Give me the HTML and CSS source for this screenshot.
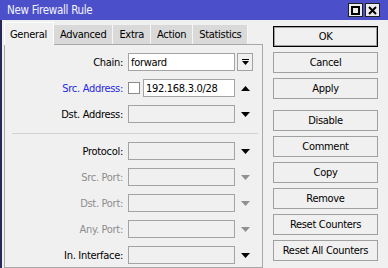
FILE: index.html
```html
<!DOCTYPE html>
<html lang="en">
<head>
<meta charset="UTF-8" />
<title>New Firewall Rule</title>
<link rel="stylesheet" href="styles.css">
</head>
<body>

<div class="window">
  <div class="titlebar">
    <span class="title">New Firewall Rule</span>
    <div class="win-btns">
      <span class="win-btn">
        <svg width="9" height="9" viewBox="0 0 9 9"><rect x="1" y="1" width="7" height="7" fill="none" stroke="#000" stroke-width="2"/></svg>
      </span>
      <span class="win-btn">
        <svg width="9" height="9" viewBox="0 0 9 9"><path d="M1 1L8 8M8 1L1 8" stroke="#000" stroke-width="2"/></svg>
      </span>
    </div>
  </div>

  <div class="content">
    <div class="tabs-area">
      <div class="tabstrip">
        <span class="tab active">General</span>
        <span class="tab">Advanced</span>
        <span class="tab">Extra</span>
        <span class="tab">Action</span>
        <span class="tab">Statistics</span>
      </div>

      <div class="panel">
        <div class="row">
          <label>Chain:</label>
          <span class="field filled">forward</span>
          <span class="drop">
            <svg width="7" height="6" viewBox="0 0 7 6"><rect x="0" y="0" width="7" height="1" fill="#000"/><path d="M0 2H7L3.5 6Z" fill="#000"/></svg>
          </span>
        </div>
        <div class="row">
          <label class="link">Src. Address:</label>
          <span class="check"></span>
          <span class="field filled short">192.168.3.0/28</span>
          <svg class="arrow" width="9" height="5" viewBox="0 0 9 5"><path d="M0 5H9L4.5 0Z" fill="#000"/></svg>
        </div>
        <div class="row">
          <label>Dst. Address:</label>
          <span class="field"></span>
          <svg class="arrow" width="9" height="5" viewBox="0 0 9 5"><path d="M0 0H9L4.5 5Z" fill="#000"/></svg>
        </div>

        <div class="sep"></div>

        <div class="row">
          <label>Protocol:</label>
          <span class="field"></span>
          <svg class="arrow" width="9" height="5" viewBox="0 0 9 5"><path d="M0 0H9L4.5 5Z" fill="#000"/></svg>
        </div>
        <div class="row">
          <label class="muted">Src. Port:</label>
          <span class="field"></span>
          <svg class="arrow" width="9" height="5" viewBox="0 0 9 5"><path d="M0 0H9L4.5 5Z" fill="#909090"/></svg>
        </div>
        <div class="row">
          <label class="muted">Dst. Port:</label>
          <span class="field"></span>
          <svg class="arrow" width="9" height="5" viewBox="0 0 9 5"><path d="M0 0H9L4.5 5Z" fill="#909090"/></svg>
        </div>
        <div class="row">
          <label class="muted">Any. Port:</label>
          <span class="field"></span>
          <svg class="arrow" width="9" height="5" viewBox="0 0 9 5"><path d="M0 0H9L4.5 5Z" fill="#909090"/></svg>
        </div>
        <div class="row">
          <label>In. Interface:</label>
          <span class="field"></span>
          <svg class="arrow" width="9" height="5" viewBox="0 0 9 5"><path d="M0 0H9L4.5 5Z" fill="#000"/></svg>
        </div>
      </div>
    </div>

    <div class="actions">
      <span class="btn default">OK</span>
      <span class="btn">Cancel</span>
      <span class="btn">Apply</span>
      <span class="btn spaced">Disable</span>
      <span class="btn">Comment</span>
      <span class="btn">Copy</span>
      <span class="btn">Remove</span>
      <span class="btn">Reset Counters</span>
      <span class="btn">Reset All Counters</span>
    </div>
  </div>
</div>

</body>
</html>
```

FILE: styles.css
```css
body {
  margin: 0;
  background: #f0f0f0;
  font-family: "DejaVu Sans Condensed", "Liberation Sans", Arial, sans-serif;
  font-stretch: condensed;
  font-size: 11px;
  letter-spacing: -0.3px;
  color: #000;
}
.window {
  width: 388px;
  height: 268px;
  overflow: hidden;
  display: flex;
  flex-direction: column;
}
.titlebar {
  height: 20px;
  flex-shrink: 0;
  background: #4b4fc9;
  color: #f4f4ff;
  display: flex;
  align-items: center;
  justify-content: space-between;
  padding: 0 8px 0 7px;
}
.title {
  font-size: 11.5px;
}
.win-btns {
  display: flex;
  gap: 2px;
}
.win-btn {
  width: 13px;
  height: 12px;
  border: 1px solid #202020;
  background: #ececec;
  display: flex;
  align-items: center;
  justify-content: center;
}
.content {
  flex: 1;
  display: flex;
  padding: 2px 0 0 2px;
  border-left: 2px solid #26285c;
}
.tabs-area {
  width: 259px;
  display: flex;
  flex-direction: column;
}
.tabstrip {
  display: flex;
  height: 22px;
  align-items: flex-end;
}
.tab {
  height: 19px;
  padding: 0 6px;
  background: #d9d9d9;
  border-right: 1px solid #f6f6f6;
  display: flex;
  align-items: center;
}
.tab.active {
  background: #f0f0f0;
  border: 1px solid #fdfdfd;
  border-bottom: none;
  padding: 0 6px 0 5px;
  position: relative;
  margin-bottom: -1px;
  box-sizing: border-box;
  height: 23px;
}
.panel {
  flex: 1;
  border: 1px solid #a8a8a8;
  background: #f0f0f0;
  padding-top: 8px;
  display: flex;
  flex-direction: column;
  gap: 8px;
}
.row {
  display: flex;
  align-items: center;
  height: 18px;
}
.row label {
  width: 118px;
  text-align: right;
  margin-right: 5px;
}
.link {
  color: #2626e6;
}
.muted {
  color: #8d8d8d;
}
.field {
  width: 107px;
  height: 18px;
  box-sizing: border-box;
  border: 1px solid #a3a3a3;
  background: #f0f0f0;
  padding-left: 2px;
  display: flex;
  align-items: center;
}
.field.filled {
  background: #fff;
}
.field.short {
  width: 92px;
}
.check {
  width: 12px;
  height: 12px;
  box-sizing: border-box;
  border: 1px solid #8a8a8a;
  background: #fff;
  margin-right: 3px;
}
.drop {
  width: 16px;
  height: 18px;
  box-sizing: border-box;
  border: 1px solid #a3a3a3;
  margin-left: 2px;
  display: flex;
  align-items: center;
  justify-content: center;
}
.arrow {
  margin-left: 6px;
}
.sep {
  height: 1px;
  background: #d2d2d2;
  margin: 2px 4px 0 7px;
}
.actions {
  width: 105px;
  margin-left: 10px;
  padding-top: 4px;
  display: flex;
  flex-direction: column;
  gap: 5px;
}
.btn {
  height: 21px;
  flex-shrink: 0;
  box-sizing: border-box;
  border: 1px solid #a0a0a0;
  background: #f0f0f0;
  display: flex;
  align-items: center;
  justify-content: center;
}
.btn.default {
  border-color: #000;
  box-shadow: inset 0 0 0 1px #a0a0a0;
}
.btn.spaced {
  margin-top: 6px;
}
```
